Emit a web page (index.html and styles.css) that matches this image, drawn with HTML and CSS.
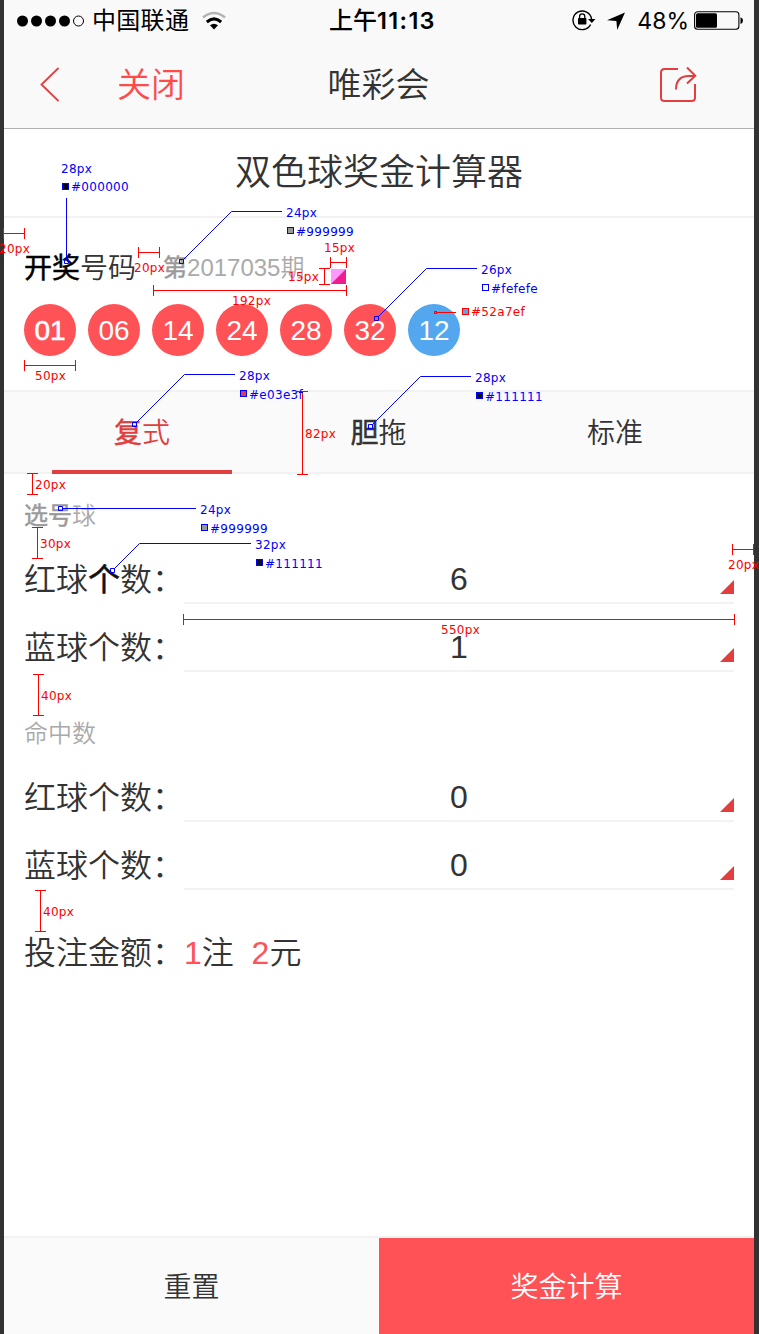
FILE: index.html
```html
<!DOCTYPE html>
<html lang="zh-CN">
<head>
<meta charset="utf-8">
<title>双色球奖金计算器</title>
<link rel="stylesheet" href="styles.css">
</head>
<body>
<div class="device">
  <header class="top">
    <div class="status">
      <div class="status-left">
        <svg width="68" height="14" viewBox="0 0 68 14"><g><circle cx="5.5" cy="7" r="5.5"/><circle cx="19.5" cy="7" r="5.5"/><circle cx="33.5" cy="7" r="5.5"/><circle cx="47.5" cy="7" r="5.5"/><circle cx="61.5" cy="7" r="5" fill="none" stroke="#000"/></g></svg>
        <span class="carrier">中国联通</span>
        <svg class="wifi" width="24" height="20" viewBox="0 0 24 20" fill="none"><path d="M1 6.500Q12-2.500 23 6.500" stroke="#b3b3b3" stroke-width="2.600"/><path d="M4.800 11Q12 4.800 19.200 11" stroke="#000" stroke-width="3"/><path d="M12 18.500l-4-4.200q4-3.100 8 0z" fill="#000"/></svg>
      </div>
      <div class="clock">上午<b>11:13</b></div>
      <div class="status-right">
        <svg width="24" height="22" viewBox="0 0 24 22"><path d="M18.600 14.500A9.300 9.300 0 1 1 19.500 9" fill="none" stroke="#000" stroke-width="1.400"/><path d="M16 9h7.500l-3.700 4z"/><rect x="6" y="8" width="8.400" height="6.500" rx=".8"/><path d="M7.600 8V6.500a2.600 2.600 0 0 1 5.200 0v1.500" fill="none" stroke="#000" stroke-width="1.300"/></svg>
        <svg class="locate" width="20" height="20" viewBox="0 0 20 20"><path d="M19 1.500L11.200 19 10.400 10.100 1 9.200z"/></svg>
        <span class="percent">48%</span>
        <svg class="battery" width="50" height="20" viewBox="0 0 50 20"><rect x=".6" y=".7" width="44.300" height="17.500" rx="3" fill="none" stroke="#000" stroke-width="1.100"/><rect x="2" y="2.200" width="21" height="14.500" rx="1.500"/><path d="M46.500 6.200q2.500.8 2.500 3.400t-2.500 3.400z"/></svg>
      </div>
    </div>
    <nav class="nav">
      <div class="nav-left">
        <svg width="20" height="36" viewBox="0 0 20 36"><path d="M19.500 1L2.500 17.500 19.500 34" fill="none" stroke="#e03e3f" stroke-width="1.800"/></svg>
        <span class="close">关闭</span>
      </div>
      <h1 class="nav-title">唯彩会</h1>
      <div class="nav-right">
        <svg width="38" height="38" viewBox="0 0 38 38" fill="none" stroke="#e03e3f" stroke-width="2"><path d="M19 3H5.500Q2 3 2 6.500V31.500Q2 35 5.500 35H32.500Q36 35 36 31.500V18"/><path d="M17 23.500Q17 10 30 10H36"/><path d="M28 1.500L36.300 9.700 28 17.500"/></svg>
      </div>
    </nav>
  </header>

  <h2 class="title">双色球奖金计算器</h2>

  <section class="draw">
    <div class="draw-head">
      <span class="draw-label"><em>开奖</em>号码</span>
      <span class="issue"><em>第</em>2017035期</span>
      <svg class="picker" width="15" height="15"><path fill="#f9f" d="M0 0h15v15H0z"/><path fill="#ee1e8f" d="M15 0v15H0z"/></svg>
    </div>
    <div class="balls">
      <span class="ball first">01</span><span class="ball">06</span><span class="ball">14</span><span class="ball">24</span><span class="ball">28</span><span class="ball">32</span><span class="ball blue">12</span>
    </div>
  </section>

  <div class="tabs">
    <div class="tab active"><span><em>复</em>式</span></div>
    <div class="tab"><span><em>胆</em>拖</span></div>
    <div class="tab"><span>标准</span></div>
  </div>

  <main class="form">
    <h3 class="group"><em>选号</em>球</h3>
    <div class="row"><label>红球<em>个</em>数：</label><div class="field">6</div></div>
    <div class="row"><label>蓝球个数：</label><div class="field">1</div></div>
    <h3 class="group hits">命中数</h3>
    <div class="row"><label>红球个数：</label><div class="field">0</div></div>
    <div class="row"><label>蓝球个数：</label><div class="field">0</div></div>
    <p class="amount">投注金额：<b>1</b>注&nbsp; <b>2</b>元</p>
  </main>

  <footer class="actions">
    <div class="reset">重置</div>
    <div class="calc">奖金计算</div>
  </footer>
</div>

<svg class="notes" width="759" height="1334" viewBox="0 0 759 1334">
  <g class="measure">
    <path d="M4 233.500H24M24.500 228V239M3.500 228V239M138.500 247V258M138 252.500H160M159.500 247V258M153.500 285V296M153 290.500H347M346.500 285V296M330.500 257V268M330 262.500H347M346.500 257V268M319 268.500H330M324.500 268V285M319 284.500H330M24.500 360V371M24 365.500H76M75.500 360V371M297 391.500H308M302.500 391V475M297 474.500H308M27 473.500H38M32.500 473V495M27 494.500H38M32 527.500H43M37.500 527V559M32 558.500H43M732.500 544V555M732 549.500H754M753.500 544V555M183.500 614V625M183 619.500H735M734.500 614V625M33 674.500H44M38.500 674V716M33 715.500H44M35 890.500H46M40.500 890V932M35 931.500H46M437 312.500H456"/>
    <rect x="434.500" y="311.500" width="2" height="2"/>
    <rect x="462.500" y="308.500" width="6" height="6" fill="#52a7ef"/>
  </g>
  <g class="measure-text">
    <text x="-1" y="253">20px</text><text x="134" y="272">20px</text><text x="232" y="305">192px</text><text x="324" y="252">15px</text><text x="288" y="281">15px</text><text x="35" y="380">50px</text><text x="305" y="438">82px</text><text x="35" y="489">20px</text><text x="40" y="548">30px</text><text x="728" y="569">20px</text><text x="441" y="634">550px</text><text x="41" y="700">40px</text><text x="43" y="916">40px</text><text x="471" y="316">#52a7ef</text>
  </g>
  <g class="callout">
    <path d="M66.500 198V260M183 260L231.500 211.500H282M378 317L426.500 268.500H477M136 423L184.500 374.500H235M372 425L420.500 376.500H471M63 508.500H196M114 569L139.500 543.500H251"/>
    <path d="M64.500 259.500h4v4h-4zM179.500 259.500h4v4h-4zM374.500 316.500h4v4h-4zM132.500 422.500h4v4h-4zM368.500 424.500h4v4h-4zM58.500 506.500h4v4h-4zM110.500 568.500h4v4h-4z"/>
    <rect x="62.500" y="183.500" width="6" height="6" fill="#000"/><rect x="287.500" y="227.500" width="6" height="6" fill="#999"/><rect x="482.500" y="284.500" width="6" height="6" fill="#fefefe"/><rect x="240.500" y="390.500" width="6" height="6" fill="#e03e3f"/><rect x="476.500" y="392.500" width="6" height="6" fill="#111"/><rect x="201.500" y="524.500" width="6" height="6" fill="#999"/><rect x="256.500" y="559.500" width="6" height="6" fill="#111"/>
  </g>
  <g class="callout-text">
    <text x="61" y="173">28px</text><text x="71" y="191">#000000</text>
    <text x="286" y="217">24px</text><text x="296" y="236">#999999</text>
    <text x="481" y="274">26px</text><text x="491" y="293">#fefefe</text>
    <text x="239" y="380">28px</text><text x="249" y="399">#e03e3f</text>
    <text x="475" y="382">28px</text><text x="485" y="401">#111111</text>
    <text x="200" y="514">24px</text><text x="210" y="533">#999999</text>
    <text x="255" y="549">32px</text><text x="265" y="568">#111111</text>
  </g>
</svg>
</body>
</html>
```
FILE: styles.css
```css
* { box-sizing: border-box; }
body {
  margin: 0;
  padding: 0 5px 0 4px;
  height: 1334px;
  background: #323232;
  color: #333;
  font-family: "Liberation Sans", "Noto Sans CJK SC", sans-serif;
  font-weight: 350;
  position: relative;
  overflow: hidden;
}
svg { display: block; flex: none; }
h1, h2, h3, p { margin: 0; font-weight: inherit; }
em { font-style: normal; font-weight: 400; -webkit-text-stroke: .5px currentColor; }
.device {
  height: 1334px;
  display: flex;
  flex-direction: column;
  background: #fff;
}
.top {
  height: 129px;
  background: #f9f9f9;
  border-bottom: 1px solid #b2b2b2;
}
.status {
  height: 40px;
  display: grid;
  grid-template-columns: 1fr auto 1fr;
  align-items: center;
  color: #000;
  font-size: 24px;
  line-height: 42px;
  padding: 0 10px 0 13px;
}
.status-left, .status-right { display: flex; align-items: center; }
.status-right { justify-content: flex-end; }
.carrier { margin-left: 7px; letter-spacing: .3px; font-weight: 400; }
.wifi { margin-left: 13px; }
.clock { font-weight: 500; margin-left: 4px; }
.clock b, .percent { font-family: Inter, sans-serif; }
.clock b { font-weight: 600; font-size: 23.5px; letter-spacing: 1.3px; }
.percent { font-weight: 400; font-size: 23px; margin-left: 11px; }
.locate { margin-left: 11px; margin-right: -1px; }
.percent { margin-left: 12px; margin-right: -1px; }
.status-right > svg:first-child { margin-right: -1px; }
.battery { margin-left: 6px; }
.nav {
  height: 88px;
  display: grid;
  grid-template-columns: 1fr auto 1fr;
  align-items: center;
  font-size: 34px;
  line-height: 90px;
  padding: 0 57px 0 35px;
}
.nav-left { display: flex; align-items: center; }
.close { margin-left: 58px; color: #ff4a4c; }
.nav-title { font-size: 34px; margin-left: 21px; }
.nav-right { display: flex; justify-content: flex-end; }
.title {
  height: 89px;
  border-bottom: 2px solid #f2f2f2;
  text-align: center;
  font-size: 36px;
  line-height: 88px;
}
.draw { height: 172px; padding: 30px 20px 0; }
.draw-head { height: 40px; display: flex; line-height: 40px; }
.draw-label { font-size: 28px; line-height: 42px; }
.draw-label em { color: #000; }
.issue { margin-left: 27px; font-size: 24px; color: #aaa; }
.issue em { color: #999; }
.picker { margin: 21px 0 0 27px; }
.balls { display: flex; gap: 12px; padding-top: 16px; }
.ball {
  width: 52px;
  height: 52px;
  border-radius: 50%;
  background: #ff5257;
  color: #fefefe;
  font-size: 28px;
  line-height: 53px;
  text-align: center;
}
.first { -webkit-text-stroke: .6px #fefefe; }
.blue { background: #52a7ef; }
.tabs {
  height: 84px;
  display: grid;
  grid-template-columns: repeat(3, 180px);
  justify-content: space-between;
  padding: 0 49px 0 48px;
  background: #fafafa;
  border: solid #f2f2f2;
  border-width: 2px 0;
  font-size: 28px;
  line-height: 84px;
  text-align: center;
}
.tab { height: 82px; }
.active { color: #e03e3f; border-bottom: 4px solid #e03e3f; }
.form { flex: 1; padding: 22px 20px 0; }
.group { height: 40px; font-size: 24px; line-height: 40px; color: #aaa; }
.group em { color: #999; }
.hits { margin-top: 42px; }
.row { display: flex; height: 68px; font-size: 32px; line-height: 44px; padding-top: 22px; }
.row em { color: #111; }
label { width: 160px; flex: none; white-space: nowrap; }
.field {
  position: relative;
  flex: 1;
  height: 46px;
  border-bottom: 2px solid #f2f2f2;
  text-align: center;
  line-height: 42px;
}
.field::after {
  content: "";
  position: absolute;
  right: 0;
  bottom: 8px;
  width: 14px;
  height: 14px;
  background: #e03e3f;
  clip-path: polygon(100% 0, 100% 100%, 0 100%);
}
.amount { padding-top: 41px; font-size: 32px; line-height: 44px; }
.amount b { font-weight: inherit; color: #ff5257; }
.actions {
  height: 98px;
  display: flex;
  border-top: 2px solid #f2f2f2;
  font-size: 28px;
  line-height: 100px;
  text-align: center;
}
.reset { flex: 1; background: #fafafa; }
.calc { flex: 1; background: #ff5257; color: #fff; }
.notes { position: absolute; left: 0; top: 0; }
.notes text { font: 400 12px "DejaVu Sans", sans-serif; letter-spacing: .3px; }
.measure { fill: none; stroke: #f00; }
.measure-text { fill: #f00; }
.callout { fill: none; stroke: #00f; }
.callout-text { fill: #00f; }
```
